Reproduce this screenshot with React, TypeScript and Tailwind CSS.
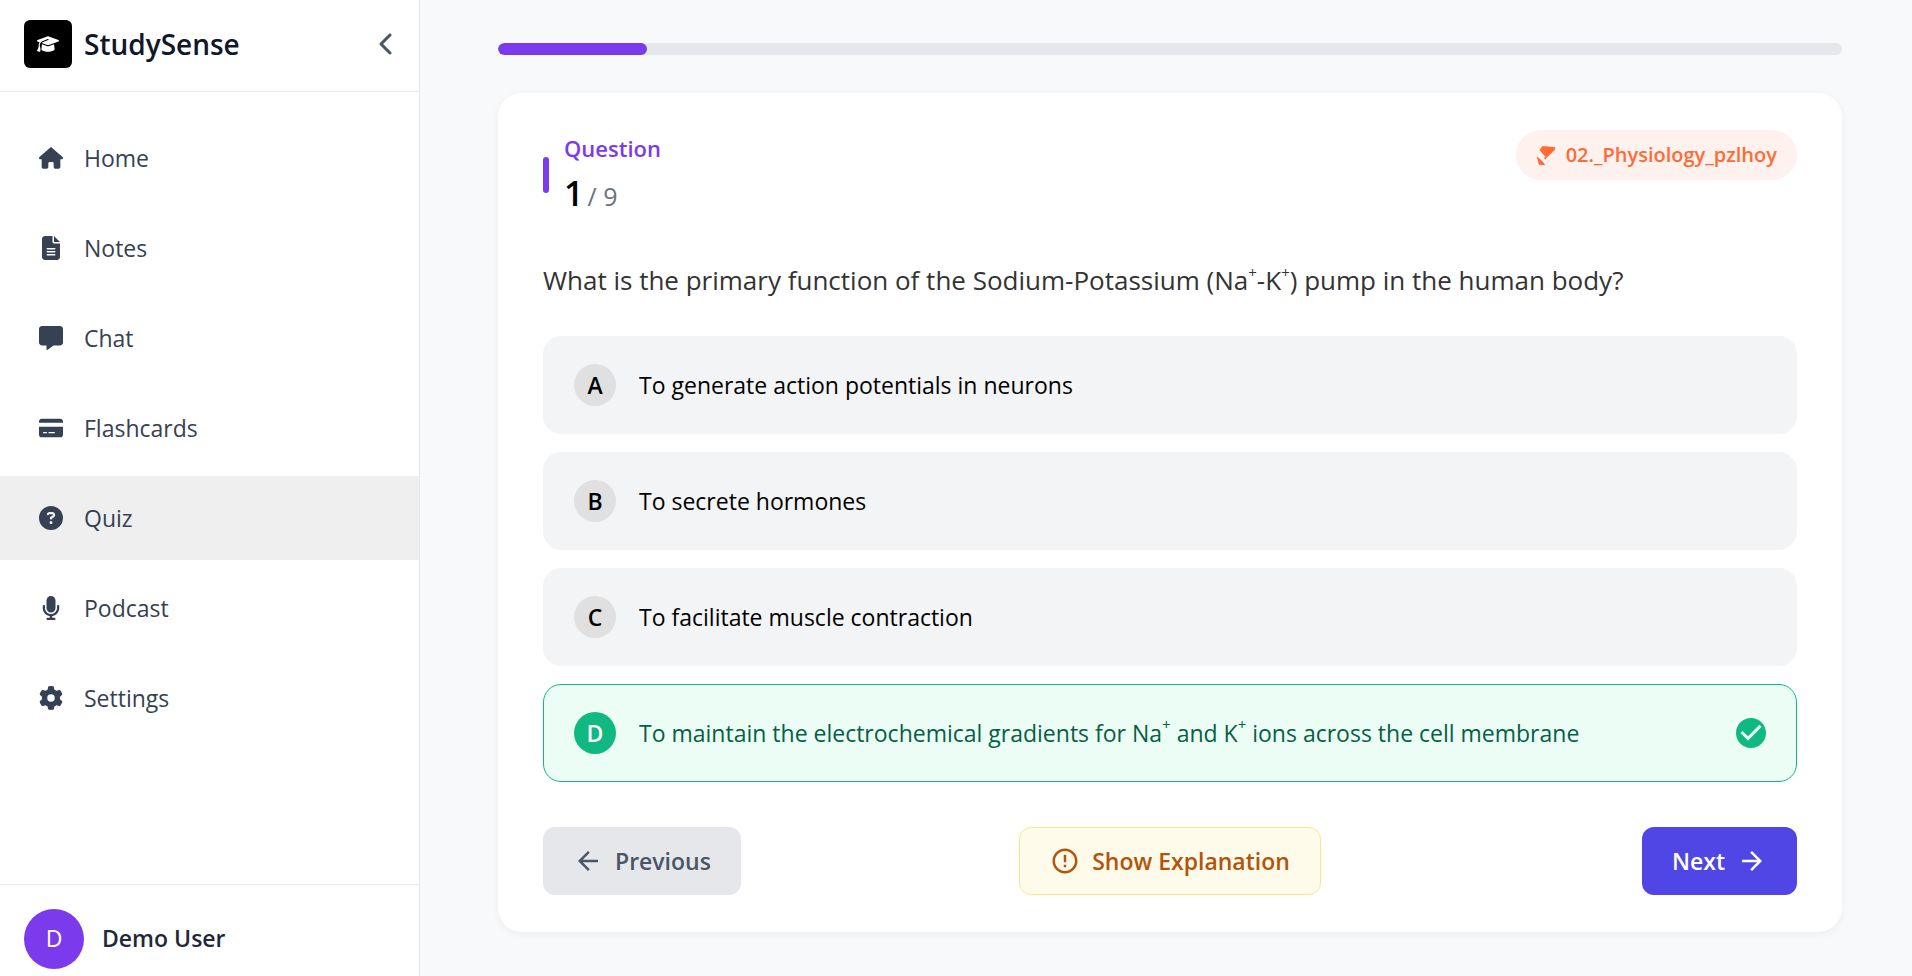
import { useState, type ReactNode } from 'react';
import {
  FaChevronLeft,
  FaCircleQuestion,
  FaCreditCard,
  FaFileLines,
  FaGear,
  FaGraduationCap,
  FaHouse,
  FaMessage,
  FaMicrophone,
} from 'react-icons/fa6';
import { MdArrowBack, MdArrowForward, MdCheckCircle, MdErrorOutline } from 'react-icons/md';

interface MenuItem {
  id: string;
  label: string;
  icon: ReactNode;
}

interface Option {
  letter: string;
  text: ReactNode;
}

const menuItems: MenuItem[] = [
  { id: 'home', label: 'Home', icon: <FaHouse className="w-auto" /> },
  { id: 'notes', label: 'Notes', icon: <FaFileLines className="w-auto" /> },
  { id: 'chat', label: 'Chat', icon: <FaMessage className="w-auto" /> },
  { id: 'flashcards', label: 'Flashcards', icon: <FaCreditCard className="w-auto" /> },
  { id: 'quiz', label: 'Quiz', icon: <FaCircleQuestion className="w-auto" /> },
  { id: 'podcast', label: 'Podcast', icon: <FaMicrophone className="w-auto" /> },
  { id: 'settings', label: 'Settings', icon: <FaGear className="w-auto" /> },
];

const Plus = () => <sup className="-top-3 text-[15px]">+</sup>;

const options: Option[] = [
  { letter: 'A', text: 'To generate action potentials in neurons' },
  { letter: 'B', text: 'To secrete hormones' },
  { letter: 'C', text: 'To facilitate muscle contraction' },
  {
    letter: 'D',
    text: <>To maintain the electrochemical gradients for Na<Plus /> and K<Plus /> ions across the cell membrane</>,
  },
];

const correctLetter = 'D';
const current = 1;
const total = 9;

const Sidebar = () => {
  const [activeItem, setActiveItem] = useState<string>('quiz');

  return (
    <aside className="flex flex-col w-[420px] shrink-0 bg-white border-r border-gray-200">
      {/* Logo */}
      <div className="flex items-center h-[92px] pl-6 pr-4 pb-1 border-b border-gray-200">
        <div className="w-12 h-12 rounded-md bg-black text-white flex items-center justify-center">
          <FaGraduationCap className="w-auto text-[22px]" />
        </div>
        <span className="ml-3 text-[28px] font-semibold text-slate-900">StudySense</span>
        <button aria-label="Collapse sidebar" className="ml-auto p-1 text-gray-600">
          <FaChevronLeft className="text-2xl" />
        </button>
      </div>

      <nav className="flex-1 flex flex-col gap-1.5 pt-6">
        {menuItems.map((item) => (
          <a
            key={item.id}
            href={`#${item.id}`}
            onClick={() => setActiveItem(item.id)}
            className={`flex items-center h-[84px] px-9 gap-[18px] text-[23px] text-gray-700 ${
              activeItem === item.id ? 'bg-[#efefef]' : ''
            }`}
          >
            <span className="w-[30px] flex justify-center text-2xl">{item.icon}</span>
            {item.label}
          </a>
        ))}
      </nav>

      {/* User */}
      <div className="flex items-center gap-[18px] h-[92px] px-6 pt-4 border-t border-gray-200">
        <div className="w-[60px] h-[60px] rounded-full bg-[#7c3aed] text-white text-[23px] flex items-center justify-center">D</div>
        <span className="text-[23px] font-semibold text-gray-800">Demo User</span>
      </div>
    </aside>
  );
};

export default function App() {
  const [selected, setSelected] = useState<string>('D');

  return (
    <div className="flex min-h-screen bg-[#f8f9fb] font-['Open_Sans',sans-serif]">
      <Sidebar />

      <main className="flex-1 pl-[78px] pr-[70px] pt-[43px] pb-10">
        <div className="h-3 rounded-full bg-gray-200 overflow-hidden">
          <div className="h-full rounded-md bg-[#7c3aed]" style={{ width: `${(current / total) * 100}%` }} />
        </div>

        <section className="mt-[38px] px-[45px] pt-[37px] pb-[37px] rounded-3xl bg-white shadow-[0_2px_8px_rgba(0,0,0,0.05)]">
          <div className="flex items-start justify-between">
            <div className="flex items-center gap-[15px]">
              <div className="w-1.5 h-9 rounded-full bg-[#7c3aed]" />
              <div>
                <div className="text-[22px] leading-9 font-semibold text-[#7c3aed]">Question</div>
                <div className="flex items-baseline gap-1">
                  <span className="text-[34px] leading-[54px] font-semibold">{current}</span>
                  <span className="text-[25px] leading-8 text-gray-500">/ {total}</span>
                </div>
              </div>
            </div>
            <div className="flex items-center gap-2.5 h-[50px] px-5 rounded-full bg-[#fff1ee] text-[#ff6b35] text-[20px] font-semibold">
              <svg viewBox="0 0 60 60" className="w-5 h-5 overflow-visible" fill="currentColor">
                <path d="M20 3 L58 7 L57 14 L31 39 L28 45 L24 38 L29 36 L10 15 Z" />
                <path d="M3 34 L21 51 L28 61 L9 59 L4 42 Z" />
              </svg>
              02._Physiology_pzlhoy
            </div>
          </div>

          <h1 className="mt-9 text-[26px] leading-[48px] text-[#333]">
            What is the primary function of the Sodium-Potassium (Na<Plus />-K<Plus />) pump in the human body?
          </h1>

          <div className="mt-8 flex flex-col gap-[18px]">
            {options.map((option) => {
              const correct = selected === option.letter && option.letter === correctLetter;
              return (
                <button
                  key={option.letter}
                  onClick={() => setSelected(option.letter)}
                  className={`flex items-center h-[98px] pl-[30px] pr-[27px] rounded-[18px] border text-left text-[23px] ${
                    correct ? 'bg-[#ebfdf5] border-[#10b981] text-[#065f46]' : 'bg-gray-100 border-gray-100 text-black'
                  }`}
                >
                  <span
                    className={`w-[42px] h-[42px] mr-[23px] shrink-0 rounded-full flex items-center justify-center font-semibold ${
                      correct ? 'bg-[#10b981] text-white' : 'bg-[#e0e0e0]'
                    }`}
                  >
                    {option.letter}
                  </span>
                  <span className="flex-1">{option.text}</span>
                  {correct && <MdCheckCircle className="text-4xl text-[#10b981]" />}
                </button>
              );
            })}
          </div>

          <div className="mt-[45px] grid grid-cols-[1fr_auto_1fr] items-center text-[23px] font-semibold">
            <button className="justify-self-start flex items-center gap-3 h-[68px] px-[30px] rounded-xl bg-gray-200 text-gray-600">
              <MdArrowBack className="text-[30px]" />
              Previous
            </button>
            <button className="flex items-center gap-3 h-[68px] px-[30px] rounded-xl border border-[#fde68a] bg-[#fffbeb] text-[#b45309]">
              <MdErrorOutline className="text-[30px]" />
              Show Explanation
            </button>
            <button className="justify-self-end flex items-center gap-3 h-[68px] px-[30px] rounded-xl bg-[#4f46e5] text-white">
              Next
              <MdArrowForward className="text-[30px]" />
            </button>
          </div>
        </section>
      </main>
    </div>
  );
}
